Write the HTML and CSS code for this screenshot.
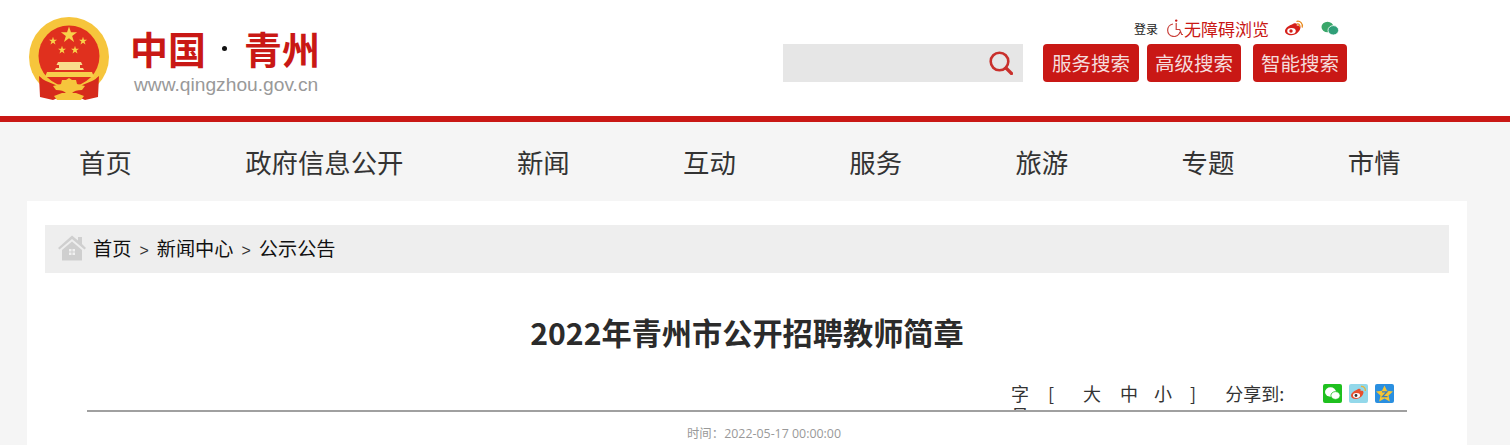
FILE: index.html
```html
<!DOCTYPE html>
<html lang="zh-CN">
<head>
    <meta charset="UTF-8">
    <title>2022年青州市公开招聘教师简章</title>
    <link rel="stylesheet" href="styles.css">
</head>
<body>
    <header class="site-header">
        <svg class="emblem" viewBox="0 0 82 86">
            <defs>
                <polygon id="star" points="0,-10 2.300,-3.200 9.500,-3.100 3.700,1.200 5.900,8.100 0,3.900 -5.900,8.100 -3.700,1.200 -9.500,-3.100 -2.300,-3.200"/>
            </defs>
            <circle cx="41" cy="41" r="40" fill="#f6c53c"/>
            <circle cx="41" cy="40" r="30.500" fill="#e0301e"/>
            <use href="#star" class="star" transform="translate(41 19) scale(.85)"/>
            <use href="#star" class="star" transform="translate(25 25) scale(.42)"/>
            <use href="#star" class="star" transform="translate(55 25) scale(.42)"/>
            <use href="#star" class="star" transform="translate(34 34) scale(.42)"/>
            <use href="#star" class="star" transform="translate(47 34) scale(.42)"/>
            <path fill="#f9dc8c" d="M30 46h23l1.500 3H52v3h3l1 2H27l1-2h3v-3h-2.500z"/>
            <path fill="#f7cf4c" d="M19 56h45l2 5H17z"/>
            <path fill="#d62a1c" d="M11 60c3 2 4 4 7 5l12 5h22l12-5c3-1 4-3 7-5l-1 21-13 3-7-3H32l-7 3-13-3z"/>
            <path fill="#f6c53c" d="M41 62l3 2 4 0 1 4 8 2-3 4c-5 0-8 1-10 3h-6c-2-2-5-3-10-3l-3-4 8-2 1-4 4 0z"/>
            <path fill="#f6c53c" d="M26 80l8-3h14l8 3-3 4H29z"/>
        </svg>
        <div class="brand">
            <div class="brand-name"><span>中国</span><i class="brand-dot"></i><span>青州</span></div>
            <div class="brand-url">www.qingzhou.gov.cn</div>
        </div>
        <div class="header-right">
            <div class="top-links">
                <a class="login-link">登录</a>
                <svg class="icon-access" viewBox="0 0 16 18">
                    <circle cx="9.200" cy="1.600" r="1.200" fill="#c91815"/>
                    <path d="M6 5A6.300 6.300 0 1 0 13 13M9.200 4v6.500h3.500l2 5H16" fill="none" stroke="#c9403a" stroke-width="1.200"/>
                </svg>
                <a class="access-link">无障碍浏览</a>
                <svg class="icon-weibo" viewBox="0 0 20 17">
                    <path fill="#d5201a" d="M8 4.500c2-1.500 4-1.600 4.700-.7.400.6.300 1.300 0 2 2-.6 3.700-.2 3.800 1.500 0 3.500-4.200 8-9.200 8C3.700 15.300 1 13.500 1 11c0-2.300 3-5.300 7-6.500z"/>
                    <ellipse cx="7.500" cy="11" rx="4.300" ry="3" fill="#fff"/>
                    <circle cx="7" cy="11" r="1.700" fill="#d5201a"/>
                    <path d="M13 1.300c3.200-.6 6 2.200 5.200 5.700M13.400 4c1.600-.3 2.800 1 2.400 2.700" fill="none" stroke="#e8891c" stroke-width="1.300" stroke-linecap="round"/>
                </svg>
                <svg class="icon-wechat" viewBox="0 0 18 15">
                    <ellipse cx="6.500" cy="6" rx="6" ry="5.200" fill="#3aa76a"/>
                    <ellipse cx="12.300" cy="9.300" rx="5.300" ry="4.700" fill="#2f9f78" stroke="#fff" stroke-width=".8"/>
                </svg>
            </div>
            <div class="search-row">
                <div class="search-box">
                    <svg class="icon-search" viewBox="0 0 24 24">
                        <circle cx="10.500" cy="10.500" r="8.800" fill="none" stroke="#c9302c" stroke-width="2.600"/>
                        <path d="M17 17l5.500 5.500" stroke="#c9302c" stroke-width="3.200" stroke-linecap="round"/>
                    </svg>
                </div>
                <a class="search-btn btn-service">服务搜索</a>
                <a class="search-btn btn-advanced">高级搜索</a>
                <a class="search-btn btn-smart">智能搜索</a>
            </div>
        </div>
    </header>

    <nav class="main-nav">
        <a>首页</a>
        <a>政府信息公开</a>
        <a>新闻</a>
        <a>互动</a>
        <a>服务</a>
        <a>旅游</a>
        <a>专题</a>
        <a>市情</a>
    </nav>

    <main class="card">
        <div class="crumbs">
            <svg class="icon-home" viewBox="0 0 28 26">
                <path fill="#cfcfcf" d="M14 .5l6 5V2h4v7l4 4-1.500 1.500L14 4 1.500 14.500 0 13z"/>
                <path fill="#cfcfcf" d="M14 6.500l10 8.500v10.500H4V15z"/>
                <path fill="#f0f0f0" d="M11 14h6v6h-6z"/>
                <path stroke="#cfcfcf" d="M14 14v6M11 17h6"/>
            </svg>
            <a>首页</a><span class="sep">&gt;</span><a>新闻中心</a><span class="sep">&gt;</span><a>公示公告</a>
        </div>

        <h1 class="title">2022年青州市公开招聘教师简章</h1>

        <div class="article-tools">
            <span class="font-label">字号</span>
            <span class="bracket-left">[</span>
            <a class="size-big">大</a>
            <a class="size-mid">中</a>
            <a class="size-small">小</a>
            <span class="bracket-right">]</span>
            <span class="share-label">分享到:</span>
            <svg class="share-icon" viewBox="0 0 19 19">
                <rect width="19" height="19" rx="2" fill="#1fc01f"/>
                <ellipse cx="7.500" cy="8" rx="5.500" ry="4.700" fill="#fff"/>
                <ellipse cx="12.500" cy="11.500" rx="4.600" ry="3.900" fill="#fff" stroke="#1fc01f" stroke-width=".8"/>
            </svg>
            <svg class="share-icon" viewBox="0 0 19 19">
                <rect width="19" height="19" rx="2" fill="#93d8ea"/>
                <path fill="#e8502e" d="M7.500 6c2-1.500 3.500-1.500 4-.7.300.5.200 1 0 1.600 1.800-.5 3-.1 3 1.400 0 2.900-3.500 6.700-7.600 6.700C3.800 15 2 13.500 2 11.500 2 9.700 4.500 7 7.500 6z"/>
                <ellipse cx="7.500" cy="11.500" rx="3.500" ry="2.400" fill="#fff"/>
                <circle cx="7" cy="11.500" r="1.400" fill="#333"/>
                <path d="M12 2.500c2.800-.4 4.800 1.800 4.300 4.500" fill="none" stroke="#e8b33a" stroke-width="1.300"/>
            </svg>
            <svg class="share-icon" viewBox="0 0 19 19">
                <rect width="19" height="19" rx="2" fill="#2a8fe0"/>
                <polygon fill="#f7c531" points="9.500,1.500 12,6.800 18,7.500 13.500,11.500 14.800,17.500 9.500,14.500 4.200,17.500 5.500,11.500 1,7.500 7,6.800"/>
                <path d="M7 7.800h5l-4.500 4.800h5" fill="none" stroke="#3f7fb5" stroke-width="1.300"/>
            </svg>
        </div>

        <div class="article-meta">时间：2022-05-17 00:00:00</div>
    </main>
</body>
</html>
```

FILE: styles.css
```css
* {
    box-sizing: border-box;
}

html, body {
    height: 445px;
    overflow: hidden;
}

body {
    margin: 0;
    background-color: #f5f5f5;
    font-family: "Noto Sans CJK SC", "Liberation Sans", sans-serif;
    color: #333;
}

/* header */
.site-header {
    display: flex;
    height: 122px;
    padding-left: 28px;
    background-color: #fff;
    border-bottom: 6px solid #c91815;
}

.emblem {
    width: 82px;
    height: 86px;
    margin-top: 16px;
}

.star {
    fill: #f8d24a;
}

.brand {
    width: 192px;
    margin-left: 20px;
    padding-top: 23px;
}

.brand-name {
    display: flex;
    align-items: center;
    height: 50px;
    font-size: 38px;
    font-weight: 700;
    line-height: 50px;
    color: #c91815;
}

.brand-dot {
    width: 5px;
    height: 5px;
    margin: 0 17px 0 16px;
    border-radius: 50%;
    background-color: #111;
}

.brand-url {
    margin-left: 4px;
    font-family: "Liberation Sans", sans-serif;
    font-size: 19.200px;
    line-height: 24px;
    white-space: nowrap;
    color: #999;
}

.header-right {
    width: 564px;
    margin-left: 461px;
}

.top-links {
    display: flex;
    align-items: center;
    justify-content: flex-end;
    height: 44px;
    padding: 12px 8px 0 0;
}

.login-link {
    font-size: 12px;
    color: #222;
}

.icon-access {
    width: 16px;
    height: 18px;
    margin-left: 9px;
}

.access-link {
    margin-left: 1px;
    font-size: 17px;
    color: #c91815;
}

.icon-weibo {
    width: 20px;
    height: 17px;
    margin-left: 15px;
}

.icon-wechat {
    width: 18px;
    height: 15px;
    margin-left: 17px;
}

.search-row {
    display: flex;
    height: 38px;
}

.search-box {
    display: flex;
    align-items: center;
    justify-content: flex-end;
    width: 240px;
    padding-right: 10px;
    background-color: #e6e6e6;
}

.icon-search {
    width: 24px;
    height: 24px;
}

.search-btn {
    height: 38px;
    border-radius: 4px;
    background-color: #c91815;
    font-size: 19.500px;
    line-height: 38px;
    text-align: center;
    color: #f5dcdc;
}

.btn-service {
    width: 96px;
    margin-left: 20px;
}

.btn-advanced {
    width: 94px;
    margin-left: 8px;
}

.btn-smart {
    width: 94px;
    margin-left: 12px;
}

/* nav */
.main-nav {
    display: flex;
    gap: 113.400px;
    height: 79px;
    padding-left: 79px;
    font-size: 26.400px;
    line-height: 80px;
    color: #333;
}

/* content */
.card {
    height: 244px;
    margin: 0 43px 0 27px;
    padding: 24px 18px 0;
    background-color: #fff;
}

.crumbs {
    display: flex;
    align-items: center;
    height: 48px;
    padding: 0 0 2px 13px;
    background-color: #eee;
    font-size: 19.200px;
    color: #111;
}

.icon-home {
    width: 28px;
    height: 26px;
    margin-right: 7px;
}

.sep {
    margin: 6px 8px 0;
    font-family: "Liberation Sans", sans-serif;
    font-size: 16px;
    color: #333;
}

.title {
    margin: 39px 0 0;
    font-size: 30.200px;
    font-weight: 700;
    line-height: 40px;
    text-align: center;
    color: #2b2b2b;
}

.article-tools {
    display: flex;
    align-items: flex-start;
    height: 31px;
    margin: 29px 42px 0;
    padding-top: 1px;
    overflow: hidden;
    border-bottom: 2px solid #a0a0a0;
    font-size: 18px;
    line-height: 22px;
    color: #333;
}

.font-label {
    width: 18px;
    margin-left: 924px;
}

.bracket-left {
    margin-left: 19px;
}

.size-big {
    margin-left: 29px;
}

.size-mid {
    margin-left: 19px;
}

.size-small {
    margin-left: 16px;
}

.bracket-right {
    margin-left: 18px;
}

.share-label {
    margin-left: 29px;
    margin-right: 39px;
}

.share-icon {
    width: 19px;
    height: 19px;
    margin-top: 2px;
    margin-right: 7px;
}

.article-meta {
    padding-left: 34px;
    margin-top: 12px;
    font-family: "Open Sans", "Noto Sans CJK SC", sans-serif;
    font-size: 12.400px;
    line-height: 20px;
    text-align: center;
    color: #999;
}
```
